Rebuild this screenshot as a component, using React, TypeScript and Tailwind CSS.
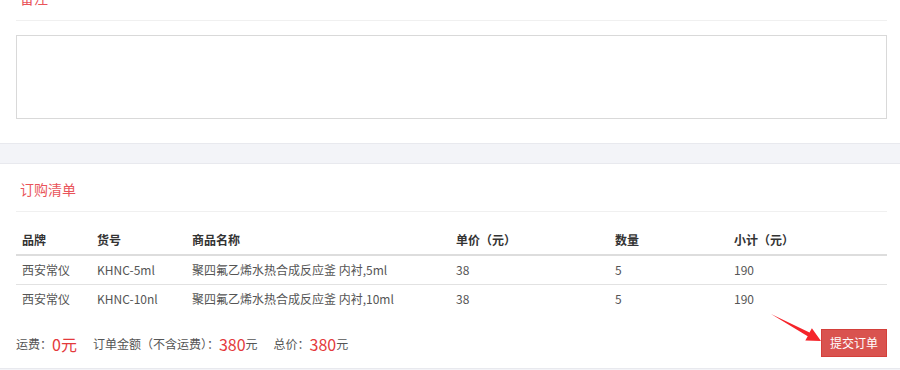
import React from "react";

interface OrderItem {
  brand: string;
  sku: string;
  name: string;
  price: number;
  qty: number;
}

const items: OrderItem[] = [
  { brand: "西安常仪", sku: "KHNC-5ml", name: "聚四氟乙烯水热合成反应釜 内衬,5ml", price: 38, qty: 5 },
  { brand: "西安常仪", sku: "KHNC-10nl", name: "聚四氟乙烯水热合成反应釜 内衬,10ml", price: 38, qty: 5 },
];

const cols = "grid grid-cols-[75px_95px_264px_159px_119px_1fr]";

const SectionTitle = ({ children }: { children: React.ReactNode }) => (
  <div className="pt-[15px] pb-[12px] pl-1 border-b border-[#f0f0f0]">
    <h3 className="text-[14px] leading-5 text-[#e9545a]">{children}</h3>
  </div>
);

const Arrow = () => (
  <svg
    className="absolute left-[765px] top-[308px] pointer-events-none"
    width="60"
    height="40"
    viewBox="765 308 60 40"
  >
    <polygon
      points="771,314 809.5,332.6 811.9,328.2 821,341 805.3,340.6 807.7,336.2"
      fill="#f5242a"
    />
  </svg>
);

export default function App() {
  return (
    <div
      className="relative w-[900px] h-[370px] overflow-hidden bg-white text-[12px] text-[#555]"
      style={{ fontFamily: '"Noto Sans CJK SC", "Noto Sans", sans-serif' }}
    >
      {/* 备注 */}
      <div className="pl-4 pr-[13px] -mt-[27px] pb-[24px]">
        <SectionTitle>备注</SectionTitle>
        <div className="mt-[14px] h-[84px] border border-[#d9d9d9]" />
      </div>

      <div className="h-[21px] bg-[#f3f4f8] border-y border-[#e8e9ee]" />

      {/* 订购清单 */}
      <div className="pl-4 pr-[13px]">
        <SectionTitle>订购清单</SectionTitle>

        <div className="mt-[14px]">
          <div className={`${cols} h-[30px] items-center border-b-2 border-[#dddddd] font-bold text-[#333]`}>
            <div className="pl-1.5">品牌</div>
            <div className="pl-1.5">货号</div>
            <div className="pl-1.5">商品名称</div>
            <div className="pl-1.5">单价（元）</div>
            <div className="pl-1.5">数量</div>
            <div className="pl-1.5">小计（元）</div>
          </div>
          {items.map((item, i) => (
            <div
              key={item.sku}
              className={`${cols} items-center ${i < items.length - 1 ? "h-[29px] border-b border-[#e2e2e2]" : "h-[28px]"}`}
            >
              <div className="pl-1.5">{item.brand}</div>
              <div className="pl-1.5">{item.sku}</div>
              <div className="pl-1.5">{item.name}</div>
              <div className="pl-1.5">{item.price}</div>
              <div className="pl-1.5">{item.qty}</div>
              <div className="pl-1.5">{item.price * item.qty}</div>
            </div>
          ))}
        </div>

        {/* Totals */}
        <div className="mt-[16px] pb-[11px] flex items-center justify-between">
          <div className="flex items-center pt-[2px]">
            <span>运费：</span>
            <span className="text-[16px] text-[#e4393c] mr-4">0元</span>
            <span>订单金额（不含运费）：</span>
            <span className="text-[16px] text-[#e4393c]">380</span>
            <span className="mr-4">元</span>
            <span>总价：</span>
            <span className="text-[16px] text-[#e4393c]">380</span>
            <span>元</span>
          </div>
          <button
            type="button"
            className="h-[28px] w-[66px] bg-[#d9534f] border border-[#d43f3a] text-white text-[12px]"
          >
            提交订单
          </button>
        </div>
      </div>

      <div className="h-[10px] bg-[#f3f4f8] border-t border-[#e8e9ee]" />

      <Arrow />
    </div>
  );
}
